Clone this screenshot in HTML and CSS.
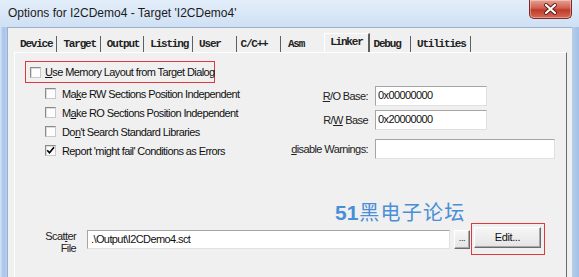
FILE: index.html
```html
<!DOCTYPE html>
<html>
	<head>
		<meta charset="UTF-8">
		<title>Options for I2CDemo4</title>
		<link rel="stylesheet" href="styles.css">
	</head>
	<body>
		<div class="window">
			<!--title bar-->
			<div class="titlebar">
				<span class="title">Options for I2CDemo4 - Target 'I2CDemo4'</span>
				<div class="close">
					<svg width="41" height="18" viewBox="0 0 41 18">
						<path d="M16 5 L25 13 M25 5 L16 13" stroke="#5a1a1a" stroke-width="4" stroke-linecap="round"/>
						<path d="M16 5 L25 13 M25 5 L16 13" stroke="#ffffff" stroke-width="2.2" stroke-linecap="round"/>
					</svg>
				</div>
			</div>
			<!--client-->
			<div class="client">
				<div class="tabs">
					<div class="tab">Device</div>
					<div class="tab">Target</div>
					<div class="tab">Output</div>
					<div class="tab">Listing</div>
					<div class="tab">User&nbsp;&nbsp;</div>
					<div class="tab tab-cpp">C/C++&nbsp;</div>
					<div class="tab tab-asm">Asm</div>
					<div class="tab active">Linker</div>
					<div class="tab tab-debug">Debug&nbsp;</div>
					<div class="tab">Utilities</div>
				</div>
				<div class="panel">
					<div class="top">
						<div class="options">
							<div class="check mark">
								<span class="box"></span>
								<span><u>U</u>se Memory Layout from Target Dialog</span>
							</div>
							<div class="sublist">
								<div class="check">
									<span class="box"></span>
									<span>Ma<u>k</u>e RW Sections Position Independent</span>
								</div>
								<div class="check">
									<span class="box"></span>
									<span>M<u>a</u>ke RO Sections Position Independent</span>
								</div>
								<div class="check">
									<span class="box"></span>
									<span>Do<u>n</u>'t Search Standard Libraries</span>
								</div>
								<div class="check">
									<span class="box checked">
										<svg width="9" height="9" viewBox="0 0 9 9"><path d="M1.2 4.2 L3.5 6.8 L8 1.2" fill="none" stroke="#000" stroke-width="1.7"/></svg>
									</span>
									<span>Report 'might fail' Conditions as Errors</span>
								</div>
							</div>
						</div>
						<div class="fields">
							<div class="label"><u>R</u>/O Base:</div>
							<div class="input short">0x00000000</div>
							<div class="label">R/<u>W</u> Base</div>
							<div class="input short">0x20000000</div>
							<div class="label row3"><u>d</u>isable Warnings:</div>
							<div class="input row3"></div>
						</div>
					</div>
					<div class="watermark"><b>51</b>黑电子论坛</div>
					<div class="scatter">
						<div class="scatter-label">Scat<u>t</u>er<br/>File</div>
						<div class="input file">.\Output\I2CDemo4.sct</div>
						<div class="btn dots">...</div>
						<div class="mark-edit">
							<div class="btn edit">Edit...</div>
						</div>
					</div>
				</div>
			</div>
		</div>
	</body>
</html>
```
FILE: styles.css
```css
body,div,span{
	margin: 0px;
	padding: 0px;
}
body{
	width: 579px;
	height: 277px;
	overflow: hidden;
	font-family: "Liberation Sans", Arial, sans-serif;
	font-size: 11px;
	color: #111;
}
.window{
	height: 277px;
	display: flex;
	flex-direction: column;
	background: linear-gradient(to right, #d6e5f6 0px, #a9c6e9 3px, #b6cfec 8px, #b6cfec 571px, #a4c1e5 579px);
}
/*title bar*/
.titlebar{
	height: 27px;
	flex: none;
	display: flex;
	background: linear-gradient(to bottom, #e3eefa, #cfe0f4);
}
.title{
	padding-left: 8px;
	line-height: 27px;
	font-size: 12px;
	color: #1b1b1b;
}
.close{
	margin-left: auto;
	margin-right: 7px;
	width: 41px;
	height: 18px;
	border: 1px solid #7d2a2a;
	border-top: none;
	border-radius: 0 0 5px 5px;
	background: linear-gradient(to bottom, #e7a193, #d0604f 45%, #c23a2a 55%, #d46a55);
	box-shadow: inset 0 0 0 1px rgba(255, 255, 255, 0.35);
}
.close svg{
	display: block;
}
/*client*/
.client{
	flex: 1;
	margin: 0 7px;
	background: #f0f0f0;
	border-left: 1px solid #9ab0cb;
	border-top: 1px solid #9ab0cb;
	display: flex;
	flex-direction: column;
}
.tabs{
	height: 19px;
	padding: 5px 0 0 6px;
	display: flex;
	align-items: flex-end;
}
.tab{
	height: 16px;
	line-height: 16px;
	padding: 0 4px 0 6px;
	font-family: "Liberation Mono", "Courier New", monospace;
	font-weight: bold;
	font-size: 11px;
	letter-spacing: -1.2px;
	color: #222;
	white-space: pre;
	border-right: 1px solid #5e5e5e;
}
.tab-cpp{
	padding: 0 7px 0 4px;
}
.tab-asm{
	padding: 0 20px 0 7px;
	border-right: none;
}
.tab.active{
	height: 19px;
	line-height: 16px;
	padding: 0 5px;
	border-left: 1px solid #ffffff;
	border-top: 1px solid #ffffff;
	border-right: 2px solid #5e5e5e;
	box-sizing: border-box;
}
.tab-debug{
	padding-left: 4px;
}
/*panel*/
.panel{
	flex: 1;
	margin: 0 5px 0 6px;
	border-top: 1px solid #ffffff;
	border-left: 1px solid #ffffff;
	border-right: 1px solid #6a6a6a;
}
.top{
	display: flex;
}
.options{
	width: 265px;
	flex: none;
}
.check{
	height: 19px;
	display: flex;
	align-items: center;
	letter-spacing: -0.6px;
	white-space: nowrap;
}
.check .box{
	width: 9px;
	height: 9px;
	margin-right: 6px;
	flex: none;
	background: #fdfdfd;
	border: 1px solid;
	border-color: #8a8a8a #c9c9c9 #c9c9c9 #8a8a8a;
	box-shadow: inset 1px 1px 0 #dcdcdc;
	display: flex;
	align-items: center;
	justify-content: center;
}
.check.mark{
	margin: 8px 0 0 10px;
	width: 184px;
	height: 20px;
	padding-left: 4px;
	border: 1px solid #dd3b3b;
}
.check.mark .box{
	margin-right: 4px;
}
.sublist{
	margin: 1px 0 0 30px;
}
.fields{
	margin-top: 32px;
	display: grid;
	grid-template-columns: 88px 180px;
	column-gap: 7px;
	row-gap: 1px;
	align-items: center;
}
.label{
	text-align: right;
	letter-spacing: -0.6px;
	white-space: nowrap;
	color: #222;
}
.input{
	height: 18px;
	line-height: 16px;
	padding-left: 2px;
	background: #ffffff;
	border: 1px solid;
	border-color: #a5a5a5 #e0e0e0 #e0e0e0 #a5a5a5;
	letter-spacing: -0.6px;
	white-space: nowrap;
	box-sizing: content-box;
}
.input.short{
	width: 108px;
}
.row3{
	margin-top: 5px;
}
/*bottom*/
.watermark{
	margin-top: 41px;
	padding-left: 320px;
	height: 22px;
	line-height: 22px;
	font-family: "Noto Sans CJK SC", sans-serif;
	font-size: 20px;
	letter-spacing: 1.2px;
	color: #4a8fd6;
}
.watermark b{
	font-family: "Liberation Sans", "Noto Sans CJK SC", sans-serif;
	font-size: 21px;
	letter-spacing: 0;
	margin-right: 1px;
}
.scatter{
	padding-left: 15px;
	display: flex;
	align-items: center;
}
.scatter-label{
	width: 46px;
	margin-top: 5px;
	text-align: right;
	line-height: 12px;
	letter-spacing: -0.6px;
	color: #222;
}
.input.file{
	width: 358px;
	height: 17px;
	margin-left: 11px;
	padding-left: 3px;
}
.btn{
	text-align: center;
	background: linear-gradient(to bottom, #f6f6f6, #e4e4e4);
	border: 1px solid;
	border-color: #ffffff #6b6b6b #6b6b6b #ffffff;
	box-shadow: inset -1px -1px 0 #a8a8a8;
	box-sizing: border-box;
	letter-spacing: -0.4px;
}
.btn.dots{
	margin-left: 4px;
	width: 16px;
	height: 19px;
	line-height: 14px;
	font-size: 9px;
}
.mark-edit{
	margin-left: 1px;
	padding: 3px 3px 6px 2px;
	border: 1px solid #dd3b3b;
}
.btn.edit{
	width: 67px;
	height: 21px;
	line-height: 19px;
}
```
